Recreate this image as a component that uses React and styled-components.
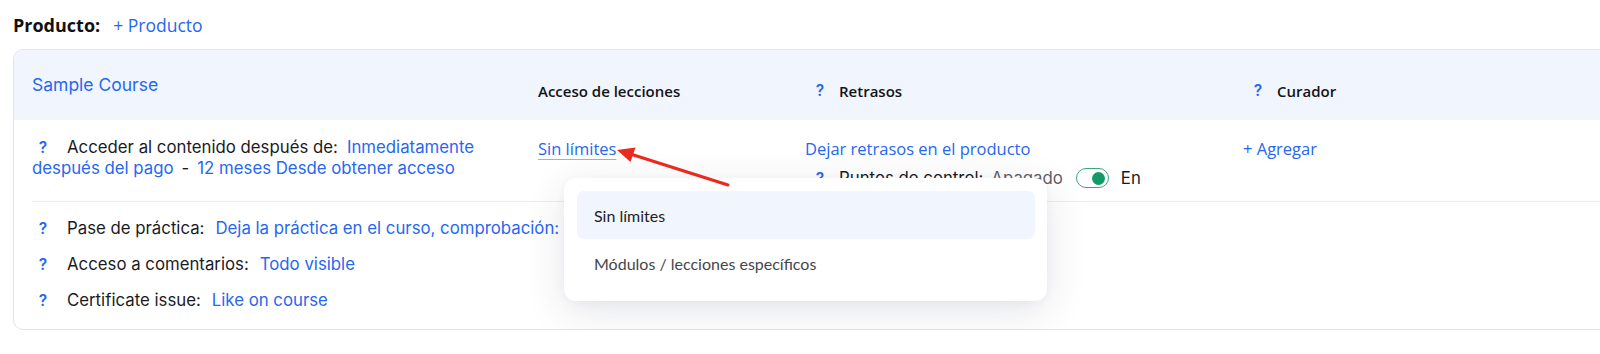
import React from "react";
import styled, { createGlobalStyle } from "styled-components";

const BLUE = "#2767f0";

const GlobalStyle = createGlobalStyle`
  body {
    margin: 0;
    background: #ffffff;
    overflow: hidden;
    font-family: Inter, "Noto Sans", sans-serif;
    color: #1b1b1f;
  }
`;

const Page = styled.div`
  padding: 14px 0 0 13px;
`;

const TitleRow = styled.div`
  display: flex;
  align-items: center;
  gap: 13px;
  height: 22px;
  .title {
    font-family: "Open Sans", sans-serif;
    font-weight: 700;
    font-size: 18px;
    color: #111;
  }
`;

const Link = styled.span`
  font-family: ${({ $heading }) => ($heading ? "Inter" : "'Open Sans'")}, sans-serif;
  font-size: ${({ $size }) => $size || 16.5}px;
  color: ${BLUE};
  white-space: nowrap;
  ${({ $underline }) =>
    $underline &&
    `text-decoration: underline; text-decoration-color: #93b2f6; text-underline-offset: 4px; text-decoration-thickness: 1px;`}
`;

const Card = styled.div`
  position: relative;
  margin-top: 13px;
  width: 1640px;
  border: 1px solid #e2e5ee;
  border-radius: 10px;
`;

const columns = "506px 267px 438px 1fr";

const Header = styled.div`
  display: grid;
  grid-template-columns: ${columns};
  align-items: center;
  height: 70px;
  padding-left: 18px;
  background: #f1f5fe;
  border-radius: 9px 9px 0 0;
`;

const HeadLabel = styled.div`
  display: flex;
  align-items: center;
  margin-top: 11px;
  font-family: "Open Sans", sans-serif;
  font-weight: 600;
  font-size: 15px;
  color: #141414;
`;

const Help = styled.span`
  display: inline-block;
  width: ${({ $w }) => $w || 22}px;
  margin-right: ${({ $gap }) => $gap ?? 13}px;
  text-align: center;
  font-family: Inter, sans-serif;
  font-weight: 600;
  font-size: 15.5px;
  color: ${BLUE};
`;

const Main = styled.div`
  display: grid;
  grid-template-columns: ${columns};
  padding: 17px 0 12px 18px;
`;

const AccessText = styled.div`
  padding-right: 26px;
  font-size: 16.8px;
  line-height: 21px;
  .value {
    color: ${BLUE};
    margin-left: 9px;
  }
  .dash {
    margin: 0 8px;
  }
`;

const Stack = styled.div`
  display: flex;
  flex-direction: column;
  align-items: flex-start;
  gap: 7px;
`;

const ControlRow = styled.div`
  display: flex;
  align-items: center;
  font-size: 16.8px;
  height: 22px;
  .off {
    color: #5f6068;
    margin-left: 8px;
  }
  .on {
    margin-left: 12px;
  }
`;

const Toggle = styled.span`
  display: inline-flex;
  align-items: center;
  justify-content: flex-end;
  box-sizing: border-box;
  width: 33px;
  height: 20px;
  margin-left: 13px;
  padding: 0 3px;
  border: 1px solid #3fa57a;
  border-radius: 10px;
  background: #fff;
  &::after {
    content: "";
    width: 13px;
    height: 13px;
    border-radius: 50%;
    background: #129a69;
  }
`;

const Divider = styled.div`
  margin-left: 18px;
  border-top: 1px solid #ececf0;
`;

const List = styled.div`
  padding: 8px 0 11px 18px;
`;

const ListRow = styled.div`
  display: flex;
  align-items: center;
  height: 36px;
  font-size: 16.8px;
  white-space: nowrap;
  .value {
    color: ${BLUE};
    margin-left: 11px;
  }
`;

const Dropdown = styled.div`
  position: absolute;
  left: 550px;
  top: 128px;
  z-index: 2;
  width: 483px;
  box-sizing: border-box;
  padding: 13px 12px 14px 13px;
  background: #fff;
  border-radius: 12px;
  box-shadow: 0 10px 40px rgba(30, 40, 70, 0.12), 0 2px 8px rgba(30, 40, 70, 0.04);
`;

const Option = styled.div`
  display: flex;
  align-items: center;
  height: 48px;
  padding-left: 17px;
  border-radius: 7px;
  font-family: Lato, sans-serif;
  font-size: 16px;
  color: ${({ $active }) => ($active ? "#1e1e22" : "#45464d")};
  background: ${({ $active }) => ($active ? "#f0f5fe" : "transparent")};
`;

const Arrow = styled.svg`
  position: absolute;
  left: 586px;
  top: 85px;
  z-index: 3;
  overflow: visible;
`;

export default function App() {
  return (
    <>
      <GlobalStyle />
      <Page>
        <TitleRow>
          <span className="title">Producto:</span>
          <Link $size={17.5}>+ Producto</Link>
        </TitleRow>

        <Card>
          <Header>
            <Link $heading $size={17.5} style={{ marginBottom: 2 }}>
              Sample Course
            </Link>
            <HeadLabel>Acceso de lecciones</HeadLabel>
            <HeadLabel>
              <Help $w={30} $gap={4}>?</Help>
              Retrasos
            </HeadLabel>
            <HeadLabel>
              <Help $w={30} $gap={4}>?</Help>
              Curador
            </HeadLabel>
          </Header>

          <Main>
            <AccessText>
              <Help>?</Help>
              Acceder al contenido después de:
              <span className="value">Inmediatamente después del pago</span>
              <span className="dash">-</span>
              <span className="value" style={{ marginLeft: 0 }}>
                12 meses Desde obtener acceso
              </span>
            </AccessText>
            <div>
              <Link $underline>Sin límites</Link>
            </div>
            <Stack>
              <Link>Dejar retrasos en el producto</Link>
              <ControlRow>
                <Help $w={30} $gap={4}>?</Help>
                Puntos de control:
                <span className="off">Apagado</span>
                <Toggle />
                <span className="on">En</span>
              </ControlRow>
            </Stack>
            <div>
              <Link>+ Agregar</Link>
            </div>
          </Main>

          <Divider />

          <List>
            <ListRow>
              <Help>?</Help>
              Pase de práctica:
              <span className="value">Deja la práctica en el curso, comprobación: Sin comprobación</span>
            </ListRow>
            <ListRow>
              <Help>?</Help>
              Acceso a comentarios:
              <span className="value">Todo visible</span>
            </ListRow>
            <ListRow>
              <Help>?</Help>
              Certificate issue:
              <span className="value">Like on course</span>
            </ListRow>
          </List>

          <Dropdown>
            <Option $active>Sin límites</Option>
            <Option>Módulos / lecciones específicos</Option>
          </Dropdown>

          <Arrow width="140" height="60" viewBox="0 0 140 60">
            <line x1="128" y1="50" x2="32" y2="19.5" stroke="#ea2a1f" strokeWidth="3" strokeLinecap="round" />
            <polygon points="17,15 35.5,12.5 30.5,27" fill="#ea2a1f" />
          </Arrow>
        </Card>
      </Page>
    </>
  );
}
